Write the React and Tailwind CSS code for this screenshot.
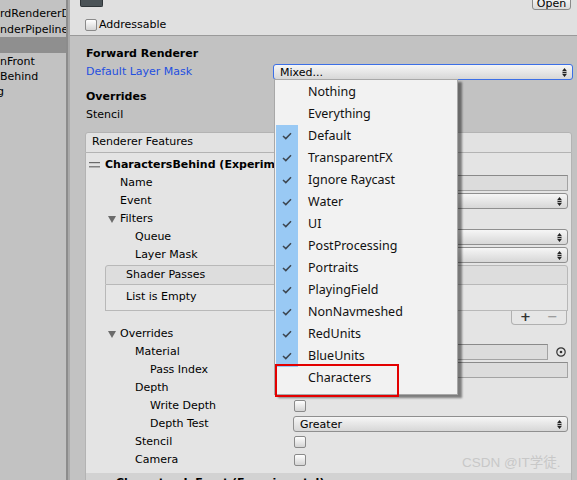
import React from "react";

const LAYERS = [
  { name: "Nothing", on: false },
  { name: "Everything", on: false },
  { name: "Default", on: true },
  { name: "TransparentFX", on: true },
  { name: "Ignore Raycast", on: true },
  { name: "Water", on: true },
  { name: "UI", on: true },
  { name: "PostProcessing", on: true },
  { name: "Portraits", on: true },
  { name: "PlayingField", on: true },
  { name: "NonNavmeshed", on: true },
  { name: "RedUnits", on: true },
  { name: "BlueUnits", on: true },
  { name: "Characters", on: false },
];

function Arrows() {
  return (
    <svg width="5" height="9" viewBox="0 0 5 9" className="shrink-0">
      <path d="M2.5 0L5 3.2H0Z M2.5 9L0 5.8H5Z" fill="#222" />
      <rect x="0.5" y="4" width="4" height="1" fill="#222" />
    </svg>
  );
}

function Dropdown({ text = "", focused = false }) {
  return (
    <div
      className={`h-[16px] w-full rounded-[3px] flex items-center justify-between pl-[6px] pr-[5px] bg-linear-to-b from-[#f6f6f6] to-[#d7d7d7] ${
        focused ? "border-[1.5px] border-[#3c6fe6]" : "border border-[#8f8f8f]"
      }`}
    >
      <span className="leading-none">{text}</span>
      <Arrows />
    </div>
  );
}

function Check() {
  return <div className="w-[12px] h-[12px] rounded-[2px] border border-[#8a8a8a] bg-linear-to-b from-white to-[#d4d4d4]" />;
}

function Field({ short = false }) {
  return (
    <div className="flex items-center w-full">
      <div className={`h-[16px] bg-[#dcdcdc] border border-[#a3a3a3] border-t-[#8a8a8a] ${short ? "w-[255px]" : "w-full"}`} />
      {short && (
        <svg width="12" height="12" viewBox="0 0 12 12" className="ml-[7px]">
          <circle cx="6" cy="6" r="4.2" fill="none" stroke="#333" strokeWidth="1.2" />
          <circle cx="6" cy="6" r="1.3" fill="#333" />
        </svg>
      )}
    </div>
  );
}

function Tri() {
  return (
    <svg width="8" height="7" viewBox="0 0 8 7" className="mr-[4px] shrink-0">
      <path d="M0 0H8L4 7Z" fill="#6b6b6b" />
    </svg>
  );
}

function Row({ label, pl, tri = false, children }) {
  return (
    <div className="flex items-center h-[18px]">
      <div className="w-[207px] shrink-0 flex items-center whitespace-nowrap" style={{ paddingLeft: pl }}>
        {tri && <Tri />}
        <span>{label}</span>
      </div>
      <div className="w-[275px] flex items-center">{children}</div>
    </div>
  );
}

function Popup() {
  return (
    <div className="absolute left-[274px] top-[79px] w-[184px] h-[316px] bg-[#f2f2f2] border border-[#a8a8a8] shadow-[4px_3px_2px_rgba(0,0,0,0.45)] pt-[1px] font-['Noto_Sans',sans-serif] text-[12.5px] text-[#111]">
      {LAYERS.map((l) => (
        <div key={l.name} className="flex h-[22px] items-center">
          <div className={`w-[22px] h-full ml-[1px] flex items-center justify-center ${l.on ? "bg-[#99c9f4]" : ""}`}>
            {l.on && (
              <svg width="10" height="8" viewBox="0 0 10 8">
                <path d="M1 4L3.8 6.6L9 1.2" fill="none" stroke="#3d4650" strokeWidth="1.5" />
              </svg>
            )}
          </div>
          <span className="pl-[10px] leading-none">{l.name}</span>
        </div>
      ))}
    </div>
  );
}

export default function App() {
  return (
    <div className="relative w-[577px] h-[480px] overflow-hidden flex bg-[#c2c2c2] text-[11px] text-black font-['DejaVu_Sans',Verdana,sans-serif]">
      {/* project list */}
      <div className="w-[66px] shrink-0 overflow-hidden whitespace-nowrap pt-[6px]">
        <div className="h-[16px] leading-[16px]">rdRendererData</div>
        <div className="h-[15px] leading-[15px]">nderPipelineAsset</div>
        <div className="h-[16px] bg-[#8f8f8f]" />
        <div className="h-[16px] leading-[18px]">nFront</div>
        <div className="h-[16px] leading-[16px]">Behind</div>
        <div className="h-[16px] leading-[14px] -ml-[3px]">g</div>
      </div>
      <div className="w-[4px] shrink-0 border-l-2 border-[#8c8c8c] bg-[#a9a9a9]" />

      {/* inspector */}
      <div className="flex-1 flex flex-col min-w-0">
        <div className="h-[36px] shrink-0 bg-[#e0e0e0] border-b border-[#9a9a9a] flex flex-col">
          <div className="flex justify-between items-start h-[11px] pl-[10px] pr-[6px]">
            <div className="w-[23px] h-[7px] bg-[#4b5357] rounded-b-[2px] border-x border-b border-[#2f3538]" />
            <div className="w-[39px] h-[12px] -mt-[2px] rounded-b-[3px] border border-[#8a8a8a] bg-linear-to-b from-[#f4f4f4] to-[#dadada] flex items-end justify-center leading-[10px]">
              Open
            </div>
          </div>
          <div className="flex items-center gap-[2px] pl-[15px] mt-[6px]">
            <Check />
            <span>Addressable</span>
          </div>
        </div>

        <div className="pl-[16px] pr-[4px] pt-[8px]">
          <div className="h-[19px] flex items-center font-bold pt-[1px]">Forward Renderer</div>
          <div className="h-[18px] flex items-center">
            <div className="w-[187px] shrink-0 text-[#1f4fe0]">Default Layer Mask</div>
            <div className="flex-1">
              <Dropdown text="Mixed..." focused />
            </div>
          </div>
          <div className="h-[18px] flex items-center font-bold mt-[7px]">Overrides</div>
          <div className="h-[18px] flex items-center">Stencil</div>
        </div>

        {/* renderer features box */}
        <div className="ml-[15px] mr-[5px] mt-[8px] flex flex-col flex-1">
          <div className="h-[21px] bg-[#e2e2e2] border border-[#b3b3b3] rounded-t-[3px] flex items-center pl-[6px]">
            Renderer Features
          </div>
          <div className="flex-1 bg-[#e4e4e4] border-x border-[#b3b3b3] flex flex-col pt-[3px]">
            <div className="h-[18px] flex items-center pl-[3px] font-bold whitespace-nowrap">
              <svg width="11" height="6" viewBox="0 0 11 6" className="mr-[5px]">
                <rect x="0" y="0" width="11" height="1.2" fill="#6a6a6a" />
                <rect x="0" y="4.2" width="11" height="1.2" fill="#6a6a6a" />
              </svg>
              CharactersBehind (Experimental)
            </div>
            <Row label="Name" pl={34}>
              <Field />
            </Row>
            <Row label="Event" pl={34}>
              <Dropdown text="AfterRenderingOpaques" />
            </Row>
            <Row label="Filters" pl={22} tri />
            <Row label="Queue" pl={49}>
              <Dropdown text="Opaque" />
            </Row>
            <Row label="Layer Mask" pl={49}>
              <Dropdown text="Characters" />
            </Row>

            {/* shader passes list */}
            <div className="ml-[19px] w-[463px] mt-[1px] flex flex-col">
              <div className="h-[20px] bg-[#dddddd] border border-[#b8b8b8] rounded-t-[3px] flex items-center pl-[20px]">
                Shader Passes
              </div>
              <div className="h-[26px] bg-[#e6e6e6] border-x border-b border-[#b8b8b8] flex items-center pl-[20px]">
                List is Empty
              </div>
              <div className="flex justify-end pr-[1px]">
                <div className="w-[56px] h-[14px] border-x border-b border-[#b0b0b0] rounded-b-[4px] bg-[#e6e6e6] flex items-center justify-around text-[#333]">
                  <span className="font-bold text-[13px] leading-none -mt-[2px]">+</span>
                  <span className="text-[#8c8c8c] text-[13px] leading-none -mt-[2px]">−</span>
                </div>
              </div>
            </div>

            <Row label="Overrides" pl={22} tri />
            <Row label="Material" pl={49}>
              <Field short />
            </Row>
            <Row label="Pass Index" pl={64}>
              <Field />
            </Row>
            <Row label="Depth" pl={49} />
            <Row label="Write Depth" pl={64}>
              <div className="pl-[1px]">
                <Check />
              </div>
            </Row>
            <Row label="Depth Test" pl={64}>
              <Dropdown text="Greater" />
            </Row>
            <Row label="Stencil" pl={49}>
              <div className="pl-[1px]">
                <Check />
              </div>
            </Row>
            <Row label="Camera" pl={49}>
              <div className="pl-[1px]">
                <Check />
              </div>
            </Row>
            <div className="mt-[4px] h-[18px] bg-[#d2d2d2] font-bold pl-[30px] pt-[1px] leading-[18px] whitespace-nowrap">
              CharactersInFront (Experimental)
            </div>
          </div>
        </div>
      </div>

      <Popup />
      <div className="absolute left-[275px] top-[364px] w-[124px] h-[33px] border-2 border-[#e30000]" />
      <div className="absolute left-[462px] top-[453px] text-[13.5px] text-[#c8c8c8] font-['Liberation_Sans','Noto_Sans_CJK_SC',sans-serif] whitespace-nowrap">
        CSDN @IT学徒.
      </div>
    </div>
  );
}
